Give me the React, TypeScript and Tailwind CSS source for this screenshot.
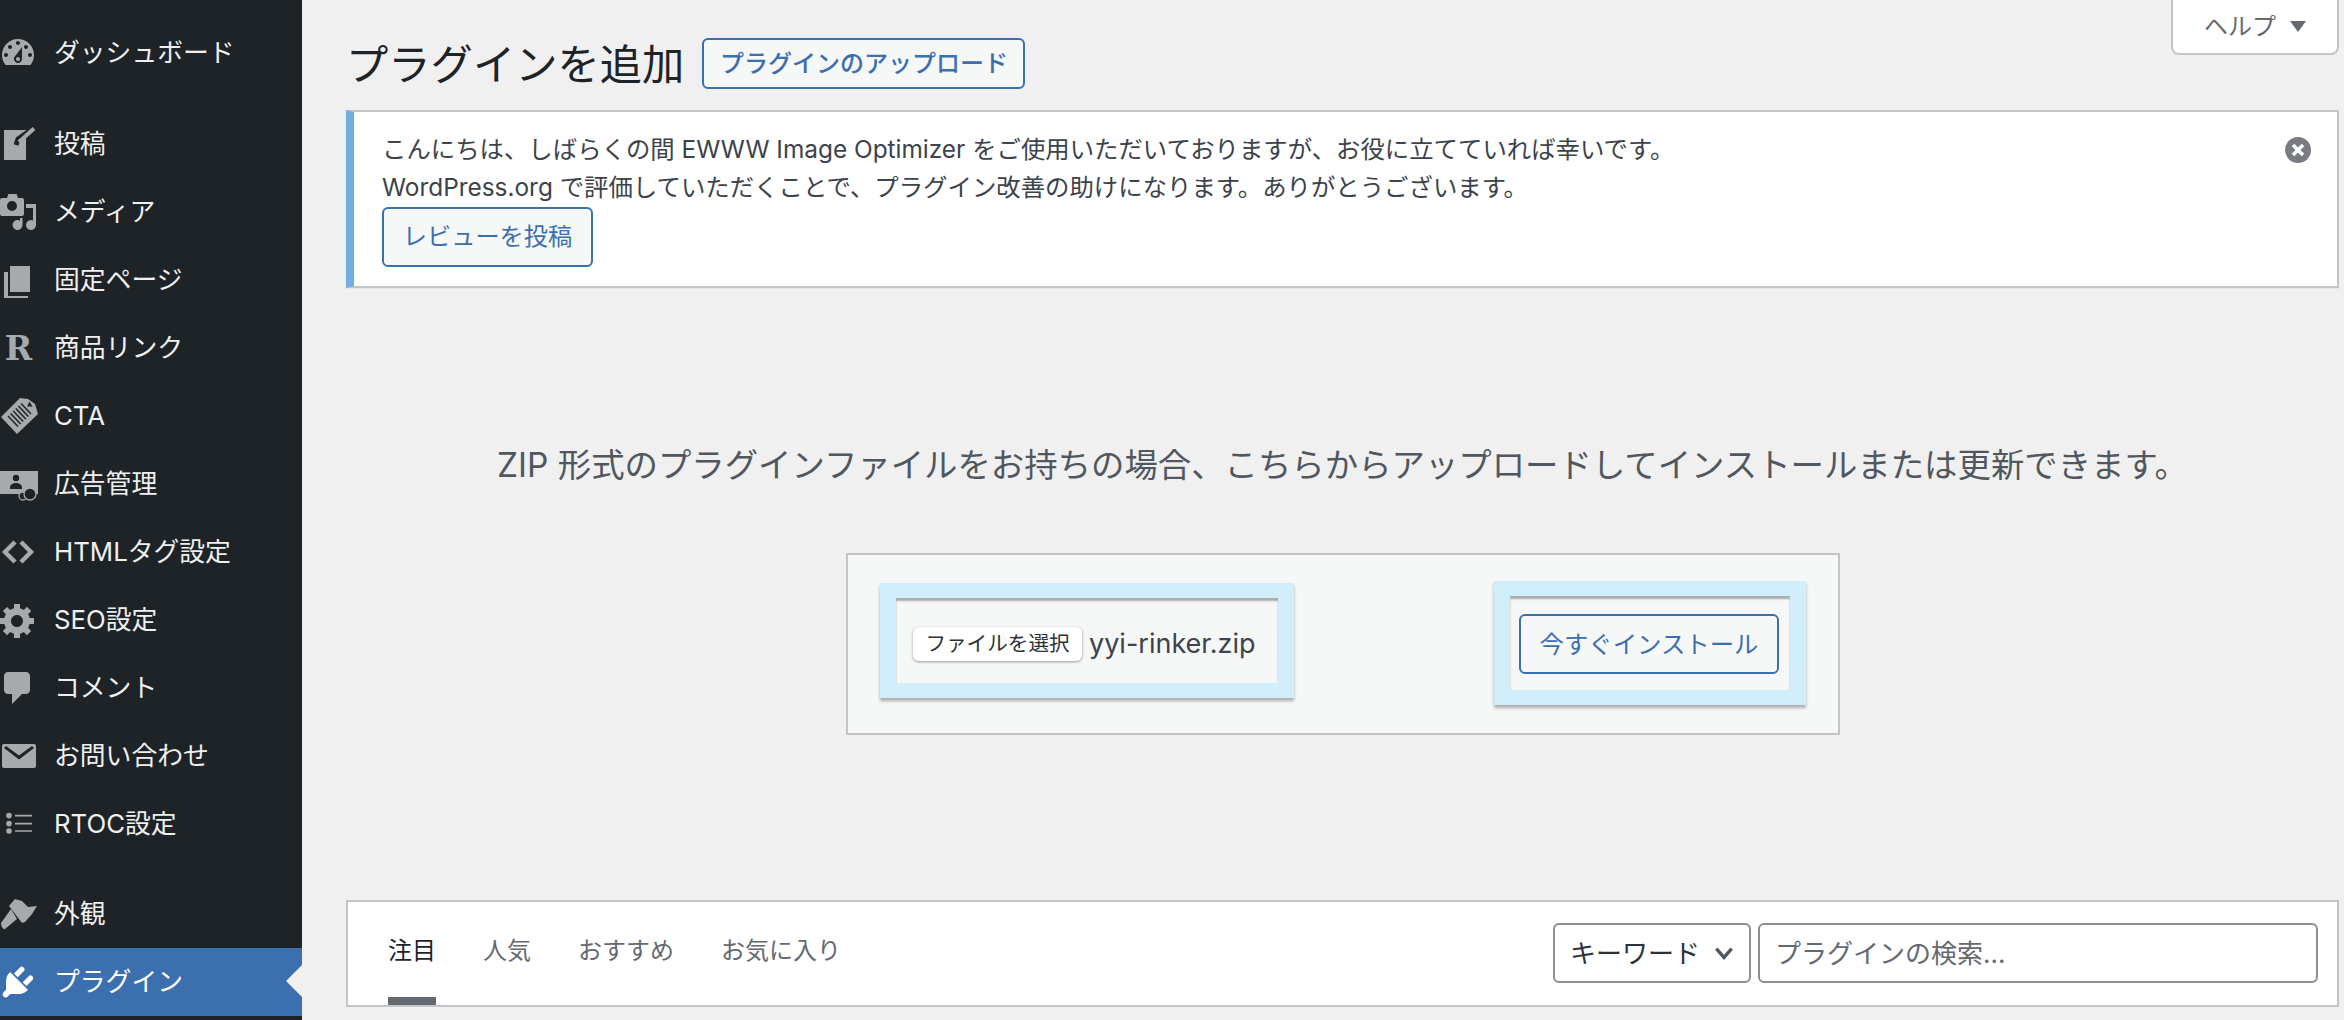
import React from 'react';

const Dash = ({ children }: { children: React.ReactNode }) => (
  <svg viewBox="0 0 20 20" className="w-10 h-10 -ml-[2px] shrink-0 fill-current">
    {children}
  </svg>
);

const menuTop = [
  {
    label: 'ダッシュボード',
    icon: (
      <path d="M3.76 16h12.48c1.1-1.37 1.76-3.11 1.76-5 0-4.42-3.58-8-8-8s-8 3.58-8 8c0 1.89.66 3.63 1.76 5zM10 4c.55 0 1 .45 1 1s-.45 1-1 1-1-.45-1-1 .45-1 1-1zM6 6c.55 0 1 .45 1 1s-.45 1-1 1-1-.45-1-1 .45-1 1-1zm8 0c.55 0 1 .45 1 1s-.45 1-1 1-1-.45-1-1 .45-1 1-1zm-5.37 5.55L12 7v6c0 1.1-.9 2-2 2s-2-.9-2-2c0-.57.24-1.08.63-1.45zM4 10c.55 0 1 .45 1 1s-.45 1-1 1-1-.45-1-1 .45-1 1-1zm12 0c.55 0 1 .45 1 1s-.45 1-1 1-1-.45-1-1 .45-1 1-1zm-5 3c0-.55-.45-1-1-1s-1 .45-1 1 .45 1 1 1 1-.45 1-1z" fillRule="evenodd" />
    ),
  },
];

const menuMain = [
  {
    label: '投稿',
    icon: (
      <g transform="scale(.5)">
        <path d="M6 6h22v30H6z" />
        <path d="M18 21l2-6 17-12" fill="none" stroke="#1d2327" strokeWidth="5" />
        <path d="M21 18L36 4.500" fill="none" stroke="currentColor" strokeWidth="4" />
      </g>
    ),
  },
  {
    label: 'メディア',
    icon: (
      <g transform="scale(.5)">
        <path
          fillRule="evenodd"
          d="M4 6h5l1-3a1 1 0 011-1h7a1 1 0 011 1l1 3h4a2 2 0 012 2v14a2 2 0 01-2 2H4a2 2 0 01-2-2V8a2 2 0 012-2zm10 3a5 5 0 100 10 5 5 0 000-10z"
        />
        <path d="M28 12h10v21a5 5 0 11-3-4.600V16h-7z" />
        <path d="M22 26h2.500v7a5 5 0 11-2.500-4.300z" />
      </g>
    ),
  },
  {
    label: '固定ページ',
    icon: (
      <>
        <path d="M6 3h10v13H6z" />
        <path d="M3 6h2v12h10v1H3z" />
      </>
    ),
  },
  {
    label: '商品リンク',
    icon: (
      <text x="10.200" y="16" textAnchor="middle" fontFamily="'DejaVu Serif', serif" fontWeight="900" fontSize="16.500">
        R
      </text>
    ),
  },
  {
    label: 'CTA',
    icon: (
      <g transform="scale(.5)">
        <path d="M22 2l8 1 7 5 3 10-21 20L3 21z" />
        <path
          d="M10 20l10 10.600M12.600 17.500l10 10.600M15.200 15l10 10.600M17.800 12.500l10 10.600M20.400 10l10 10.600M23 7.500l10 10.600"
          fill="none"
          stroke="#1d2327"
          strokeWidth="1.500"
        />
        <path d="M31.500 5.500l3 5h-5.500z" fill="#1d2327" />
      </g>
    ),
  },
  {
    label: '広告管理',
    icon: (
      <g transform="scale(.5)">
        <path d="M2 7h38v23H2z" />
        <circle cx="18" cy="14" r="3.200" fill="#1d2327" />
        <path d="M12 25v-2c0-2 3-4 6-4s6 2 6 4v2z" fill="#1d2327" />
        <circle cx="25" cy="32" r="4" fill="#1d2327" stroke="currentColor" strokeWidth="1.300" />
        <circle cx="32" cy="30" r="6" fill="#1d2327" stroke="currentColor" strokeWidth="1.300" />
      </g>
    ),
  },
  {
    label: 'HTMLタグ設定',
    icon: <path d="M8.500 5L3.500 10l5 5M11.500 5l5 5-5 5" fill="none" stroke="currentColor" strokeWidth="2.200" />,
  },
  {
    label: 'SEO設定',
    icon: (
      <path fillRule="evenodd" d="M18 12h-2.180c-.17.7-.44 1.350-.81 1.930l1.540 1.540-2.100 2.100-1.540-1.540c-.58.36-1.230.63-1.910.79V19H8v-2.180c-.68-.16-1.330-.43-1.910-.79l-1.540 1.540-2.120-2.120 1.540-1.540c-.36-.58-.63-1.230-.79-1.910H1V9.030h2.170c.16-.7.44-1.350.8-1.940L2.430 5.550l2.100-2.100 1.540 1.540c.58-.37 1.240-.64 1.930-.81V2h3v2.180c.68.16 1.330.43 1.910.79l1.540-1.540 2.120 2.120-1.540 1.540c.36.59.64 1.240.8 1.940H18V12zm-8.500 1.500c1.660 0 3-1.340 3-3s-1.340-3-3-3-3 1.340-3 3 1.340 3 3 3z" />
    ),
  },
  {
    label: 'コメント',
    icon: <path d="M5 2h9c1.100 0 2 .9 2 2v7c0 1.100-.9 2-2 2h-2l-5 5v-5H5c-1.100 0-2-.9-2-2V4c0-1.100.9-2 2-2z" />,
  },
  {
    label: 'お問い合わせ',
    icon: (
      <path fillRule="evenodd" d="M3 4h15a1 1 0 011 1v10a1 1 0 01-1 1H3a1 1 0 01-1-1V5a1 1 0 011-1zm0 2L10.500 11.800 18 6l-1-1-6.500 4.700L4 5z" />
    ),
  },
  {
    label: 'RTOC設定',
    icon: (
      <>
        <circle cx="5.500" cy="5.800" r="1.400" />
        <circle cx="5.500" cy="9.800" r="1.400" />
        <circle cx="5.500" cy="13.500" r="1.400" />
        <path d="M8.500 5.400H17v.8H8.500zM8.500 9.400H17v.8H8.500zM8.500 13.100H17v.8H8.500z" />
      </>
    ),
  },
];

const tabs = ['人気', 'おすすめ', 'お気に入り'];

const MenuItem = ({ label, icon, active }: { label: string; icon: React.ReactNode; active?: boolean }) => (
  <div
    className={
      active
        ? 'relative h-[68px] flex items-center gap-[16px] bg-[#3b6fae] text-white'
        : 'h-[68px] flex items-center gap-[16px] text-[#f0f0f1]'
    }
  >
    <span className={active ? 'text-white flex' : 'text-[#a7aaad] flex'}>
      <Dash>{icon}</Dash>
    </span>
    <span className="text-[25.8px] whitespace-nowrap">{label}</span>
    {active && (
      <span className="absolute right-0 top-[17px] border-y-[16px] border-r-[16px] border-y-transparent border-r-[#f0f0f1]" />
    )}
  </div>
);

const OutlineButton = ({ className, children }: { className: string; children: React.ReactNode }) => (
  <div
    className={`flex items-center justify-center rounded-[6px] border-2 border-[#3b6fae] bg-[#f6f7f7] text-[#3b6fae] whitespace-nowrap ${className}`}
  >
    {children}
  </div>
);

export default function App() {
  return (
    <div
      className="relative flex h-[1020px] w-[2344px] overflow-hidden bg-[#f0f0f1]"
      style={{ fontFamily: "Inter, 'Noto Sans CJK JP', sans-serif" }}
    >
      {/* sidebar */}
      <aside className="w-[302px] shrink-0 bg-[#1d2327] pt-[19px]">
        {menuTop.map((m) => (
          <MenuItem key={m.label} {...m} />
        ))}
        <div className="h-[23px]" />
        {menuMain.map((m) => (
          <MenuItem key={m.label} {...m} />
        ))}
        <div className="h-[22px]" />
        <MenuItem
          label="外観"
          icon={
            <g transform="scale(.5)">
              <path d="M17 5l7 2 6 6 9-1-5 8-7 8-3 1-13-17z" />
              <path d="M13 15l6 10-12 10c-2 1-4-3-4-6z" />
            </g>
          }
        />
        <MenuItem
          active
          label="プラグイン"
          icon={
            <path d="M13.110 4.360L9.870 7.600 8 5.730l3.240-3.240c.35-.34 1.050-.2 1.560.32.52.51.66 1.210.31 1.550zm-8 1.770l.91-1.120 9.010 9.010-1.190.84c-.71.71-2.630 1.160-3.820 1.160H6.140L4.900 17.260c-.59.59-1.540.59-2.120 0-.59-.58-.59-1.530 0-2.120l1.240-1.240v-3.880c0-1.130.4-3.190 1.090-3.890zm7.260 3.970l3.240-3.240c.34-.35 1.040-.21 1.550.31.52.51.66 1.210.31 1.550l-3.240 3.250z" />
          }
        />
      </aside>

      {/* content */}
      <main className="flex-1 min-w-0 pl-[44px] pr-[5px]">
        <div className="flex items-center h-[51px] mt-[38px]">
          <h1 className="pt-[2px] text-[42.3px] text-[#1d2327] whitespace-nowrap">プラグインを追加</h1>
          <OutlineButton className="ml-[18px] w-[323px] h-[51px] text-[24px] font-medium">
            プラグインのアップロード
          </OutlineButton>
        </div>

        <div className="relative mt-[21px] h-[178px] border-2 border-l-8 border-[#c3c4c7] border-l-[#72aee6] bg-white pl-[28px] pt-[18px] shadow-[0_1px_1px_rgba(0,0,0,0.04)]">
          <p className="text-[24.4px] leading-[38px] text-[#3c434a] whitespace-nowrap">
            こんにちは、しばらくの間 EWWW Image Optimizer をご使用いただいておりますが、お役に立てていれば幸いです。
          </p>
          <p className="text-[24.4px] leading-[38px] text-[#3c434a] whitespace-nowrap">
            WordPress.org で評価していただくことで、プラグイン改善の助けになります。ありがとうございます。
          </p>
          <OutlineButton className="mt-[1px] w-[211px] h-[60px] text-[24.2px]">レビューを投稿</OutlineButton>
          <svg viewBox="0 0 26 26" className="absolute right-[26px] top-[25px] w-[26px] h-[26px]">
            <circle cx="13" cy="13" r="13" fill="#787c82" />
            <path d="M8 8l10 10M18 8L8 18" stroke="#fff" strokeWidth="3.600" />
          </svg>
        </div>

        <p className="mt-[155px] text-center text-[33.4px] leading-[44px] text-[#50575e] whitespace-nowrap">
          ZIP 形式のプラグインファイルをお持ちの場合、こちらからアップロードしてインストールまたは更新できます。
        </p>

        <div className="ml-[500px] mt-[66px] flex h-[182px] w-[994px] items-start justify-between border-2 border-[#c3c4c7] bg-[#f6f7f7] pl-[32px] pr-[32px]">
          <div className="mt-[28px] h-[115px] w-[414px] border-x-[16px] border-y-[15px] border-[#d1eefb] bg-[#f6f7f7] pl-[17px] pt-[26px] shadow-[0_3px_3px_rgba(0,0,0,0.3),inset_0_3px_2px_rgba(0,0,0,0.3)]">
            <div className="flex items-center">
              <div className="flex h-[34px] w-[169px] items-center justify-center rounded-[6px] bg-white text-[20.6px] text-[#2c3338] shadow-[0_1px_3px_rgba(0,0,0,0.4)] whitespace-nowrap">
                ファイルを選択
              </div>
              <span className="ml-[7px] text-[27px] text-[#3c434a] whitespace-nowrap">yyi-rinker.zip</span>
            </div>
          </div>
          <div className="mt-[26px] h-[124px] w-[312px] border-x-[16px] border-y-[15px] border-[#d1eefb] bg-[#f6f7f7] pl-[9px] pt-[18px] shadow-[0_3px_3px_rgba(0,0,0,0.3),inset_0_3px_2px_rgba(0,0,0,0.3)]">
            <OutlineButton className="w-[260px] h-[60px] text-[24.4px]">今すぐインストール</OutlineButton>
          </div>
        </div>

        <div className="mt-[165px] flex h-[107px] items-start justify-between border-2 border-[#c3c4c7] bg-white pl-[40px] pr-[19px]">
          <div className="flex gap-[47px] text-[24px] leading-[34px] text-[#646970]">
            <div className="flex h-[103px] flex-col justify-between border-b-8 border-[#646970] pt-[32px] text-[#1d2327]">
              注目
            </div>
            {tabs.map((t) => (
              <div key={t} className="pt-[32px] whitespace-nowrap">
                {t}
              </div>
            ))}
          </div>
          <div className="mt-[21px] flex gap-[7px]">
            <div className="flex h-[60px] w-[198px] items-center justify-between rounded-[6px] border-2 border-[#8c8f94] pl-[15px] pr-[14px] text-[26px] text-[#2c3338] whitespace-nowrap">
              キーワード
              <svg viewBox="0 0 20 20" className="h-[22px] w-[22px] fill-none stroke-[#50575e] stroke-[3]">
                <path d="M3 6l7 8 7-8" />
              </svg>
            </div>
            <div className="flex h-[60px] w-[560px] items-center rounded-[6px] border-2 border-[#8c8f94] pl-[15px] text-[26px] text-[#646970] whitespace-nowrap">
              プラグインの検索...
            </div>
          </div>
        </div>
      </main>

      {/* help tab */}
      <div className="absolute right-[5px] top-0 flex h-[55px] w-[168px] items-center justify-center gap-[14px] rounded-b-[8px] border-2 border-t-0 border-[#c3c4c7] bg-white text-[24px] text-[#646970]">
        ヘルプ
        <span className="border-x-[8px] border-t-[11px] border-x-transparent border-t-[#646970]" />
      </div>
    </div>
  );
}
